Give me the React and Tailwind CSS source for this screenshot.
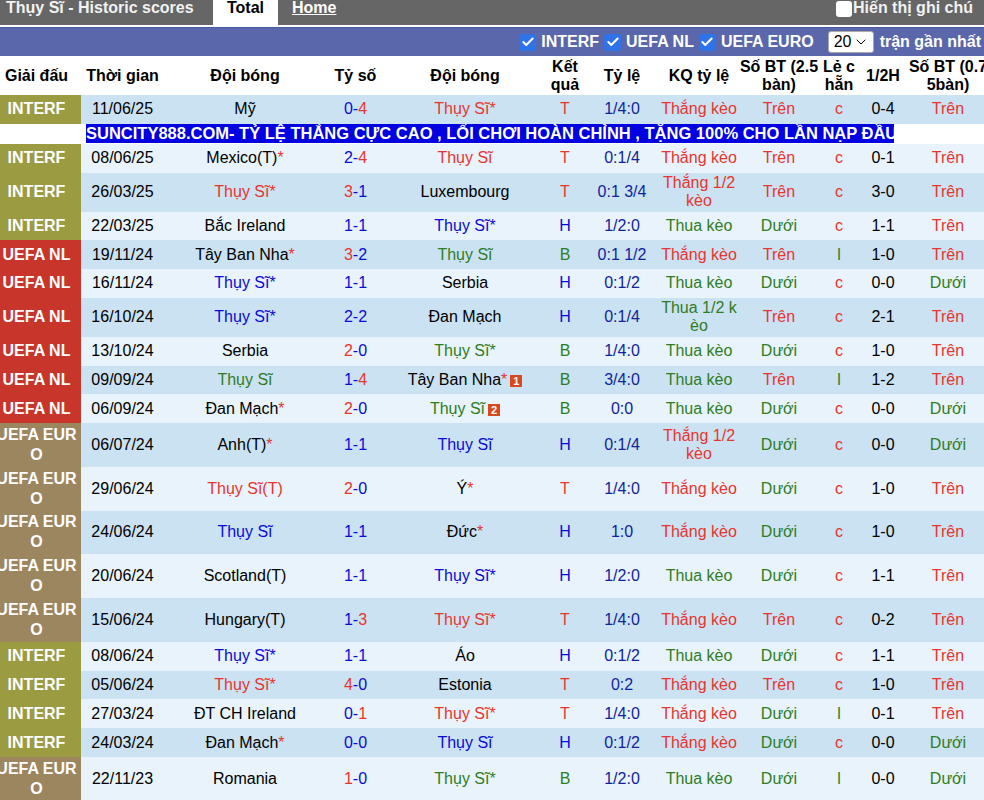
import { Check, ChevronDown } from "lucide-react";

const RED = "text-[#e8352e]";
const BLUE = "text-[#0a0ad8]";
const GREEN = "text-[#2f7d1e]";

const leagueStyles = {
  INTERF: "bg-[#9b9b42]",
  "UEFA NL": "bg-[#c8352b]",
  "UEFA EURO": "bg-[#9c8660]",
};

const rows = [
  ["INTERF", "11/06/25", "Mỹ", "0-4", "Thụy Sĩ*", "T", "1/4:0", "Thắng kèo", "Trên", "c", "0-4", "Trên", 2],
  ["AD"],
  ["INTERF", "08/06/25", "Mexico(T)*", "2-4", "Thụy Sĩ", "T", "0:1/4", "Thắng kèo", "Trên", "c", "0-1", "Trên", 2],
  ["INTERF", "26/03/25", "Thụy Sĩ*", "3-1", "Luxembourg", "T", "0:1 3/4", "Thắng 1/2 kèo", "Trên", "c", "3-0", "Trên", 1],
  ["INTERF", "22/03/25", "Bắc Ireland", "1-1", "Thụy Sĩ*", "H", "1/2:0", "Thua kèo", "Dưới", "c", "1-1", "Trên", 2],
  ["UEFA NL", "19/11/24", "Tây Ban Nha*", "3-2", "Thụy Sĩ", "B", "0:1 1/2", "Thắng kèo", "Trên", "l", "1-0", "Trên", 2],
  ["UEFA NL", "16/11/24", "Thụy Sĩ*", "1-1", "Serbia", "H", "0:1/2", "Thua kèo", "Dưới", "c", "0-0", "Dưới", 1],
  ["UEFA NL", "16/10/24", "Thụy Sĩ*", "2-2", "Đan Mạch", "H", "0:1/4", "Thua 1/2 kèo", "Trên", "c", "2-1", "Trên", 1],
  ["UEFA NL", "13/10/24", "Serbia", "2-0", "Thụy Sĩ*", "B", "1/4:0", "Thua kèo", "Dưới", "c", "1-0", "Trên", 2],
  ["UEFA NL", "09/09/24", "Thụy Sĩ", "1-4", "Tây Ban Nha*", "B", "3/4:0", "Thua kèo", "Trên", "l", "1-2", "Trên", 1, "red1"],
  ["UEFA NL", "06/09/24", "Đan Mạch*", "2-0", "Thụy Sĩ", "B", "0:0", "Thua kèo", "Dưới", "c", "0-0", "Dưới", 2, "red2"],
  ["UEFA EURO", "06/07/24", "Anh(T)*", "1-1", "Thụy Sĩ", "H", "0:1/4", "Thắng 1/2 kèo", "Dưới", "c", "0-0", "Dưới", 2],
  ["UEFA EURO", "29/06/24", "Thụy Sĩ(T)", "2-0", "Ý*", "T", "1/4:0", "Thắng kèo", "Dưới", "c", "1-0", "Trên", 1],
  ["UEFA EURO", "24/06/24", "Thụy Sĩ", "1-1", "Đức*", "H", "1:0", "Thắng kèo", "Dưới", "c", "1-0", "Trên", 1],
  ["UEFA EURO", "20/06/24", "Scotland(T)", "1-1", "Thụy Sĩ*", "H", "1/2:0", "Thua kèo", "Dưới", "c", "1-1", "Trên", 2],
  ["UEFA EURO", "15/06/24", "Hungary(T)", "1-3", "Thụy Sĩ*", "T", "1/4:0", "Thắng kèo", "Trên", "c", "0-2", "Trên", 2],
  ["INTERF", "08/06/24", "Thụy Sĩ*", "1-1", "Áo", "H", "0:1/2", "Thua kèo", "Dưới", "c", "1-1", "Trên", 1],
  ["INTERF", "05/06/24", "Thụy Sĩ*", "4-0", "Estonia", "T", "0:2", "Thắng kèo", "Trên", "c", "1-0", "Trên", 1],
  ["INTERF", "27/03/24", "ĐT CH Ireland", "0-1", "Thụy Sĩ*", "T", "1/4:0", "Thắng kèo", "Dưới", "l", "0-1", "Trên", 2],
  ["INTERF", "24/03/24", "Đan Mạch*", "0-0", "Thụy Sĩ", "H", "0:1/2", "Thắng kèo", "Dưới", "c", "0-0", "Dưới", 2],
  ["UEFA EURO", "22/11/23", "Romania", "1-0", "Thụy Sĩ*", "B", "1/2:0", "Thua kèo", "Dưới", "l", "0-0", "Dưới", 2],
];

function resultColor(result) {
  if (result === "T") return RED;
  if (result === "H") return BLUE;
  return GREEN;
}

function tone(value) {
  if (value === "Trên" || value === "c" || value.startsWith("Thắng")) return RED;
  return GREEN;
}

function Team({ name, isSwiss, result, card }) {
  const hasStar = name.endsWith("*");
  const label = hasStar ? name.slice(0, -1) : name;

  return (
    <span className={isSwiss ? resultColor(result) : "text-black"}>
      {label}
      {hasStar && <span className={isSwiss ? "" : RED}>*</span>}
      {card === "red1" && <CardBadge label="1" />}
      {card === "red2" && <CardBadge label="2" />}
    </span>
  );
}

function CardBadge({ label }) {
  return (
    <span className="ml-[3px] inline-block h-[12px] w-[12px] bg-[#d9481f] text-center align-[0px] font-['Liberation_Sans',sans-serif] text-[11px] leading-[12px] font-bold text-white">
      {label}
    </span>
  );
}

function Score({ score }) {
  const [home, away] = score.split("-");
  const homeWins = Number(home) > Number(away);
  const awayWins = Number(away) > Number(home);

  return (
    <>
      <span className={homeWins ? RED : BLUE}>{home}</span>
      <span className={BLUE}>-</span>
      <span className={awayWins ? RED : BLUE}>{away}</span>
    </>
  );
}

function Filter({ label }) {
  return (
    <label className="flex items-center gap-[5px]">
      <span className="flex h-[17px] w-[17px] items-center justify-center rounded-[3px] bg-[#2f73e8]">
        <Check size={14} strokeWidth={3.5} className="text-white" />
      </span>
      <span>{label}</span>
    </label>
  );
}

function MatchRow({ row, index }) {
  const [league, date, home, score, away, result, odds, oddsResult, overUnder, oddEven, half, overUnder2, swissSide, card] = row;
  const stripe = index % 2 === 0 ? "bg-[#cbe2f3]" : "bg-[#e8f3fb]";
  const isEuro = league === "UEFA EURO";
  const isTall = oddsResult.length > 9;

  return (
    <tr className={isEuro ? "h-[43.8px]" : isTall ? "h-[39px]" : "h-[28.75px]"}>
      <td className={`${leagueStyles[league]} p-0 text-center text-[16px] leading-[20px] font-bold break-all text-white`}>{league}</td>
      <td className={`${stripe} p-0 text-center`}>{date}</td>
      <td className={`${stripe} p-0 text-center`}>
        <Team name={home} isSwiss={swissSide === 1} result={result} />
      </td>
      <td className={`${stripe} p-0 text-center`}>
        <Score score={score} />
      </td>
      <td className={`${stripe} p-0 text-center`}>
        <Team name={away} isSwiss={swissSide === 2} result={result} card={card} />
      </td>
      <td className={`${stripe} p-0 text-center ${resultColor(result)}`}>{result}</td>
      <td className={`${stripe} p-0 text-center text-[#10239e]`}>{odds}</td>
      <td className={`${stripe} p-0 text-center break-all ${tone(oddsResult)}`}>{oddsResult}</td>
      <td className={`${stripe} p-0 text-center ${tone(overUnder)}`}>{overUnder}</td>
      <td className={`${stripe} p-0 text-center ${tone(oddEven)}`}>{oddEven}</td>
      <td className={`${stripe} p-0 text-center`}>{half}</td>
      <td className={`${stripe} p-0 text-center ${tone(overUnder2)}`}>{overUnder2}</td>
    </tr>
  );
}

export default function App() {
  let stripeIndex = -1;

  return (
    <div className="h-[800px] w-[984px] overflow-hidden bg-white font-['Liberation_Sans',Arial,sans-serif] text-[16px] leading-[18px] text-black">
      <div className="flex h-[25px] items-start justify-between overflow-hidden bg-[#666666] font-bold text-white">
        <div className="flex">
          <div className="-mt-[1px] w-[213px] pl-[6px] leading-[18px] text-[#f2f2f2]">Thụy Sĩ - Historic scores</div>
          <div className="-mt-[1px] h-[26px] w-[65px] bg-white text-center leading-[18px] text-black">Total</div>
          <a className="-mt-[1px] ml-[14px] leading-[18px] underline">Home</a>
        </div>
        <div className="-mt-[1px] flex items-center gap-[1px] pr-[11px] leading-[18px] text-[#f2f2f2]">
          <span className="mt-[1px] h-[16px] w-[16px] rounded-[3px] bg-white" />
          Hiển thị ghi chú
        </div>
      </div>

      <div className="mt-[2px] flex h-[29px] items-center justify-end gap-[5px] border-t border-[#4a5aa0] bg-[#5a67ab] pr-[3px] font-bold text-white">
        <Filter label="INTERF" />
        <Filter label="UEFA NL" />
        <Filter label="UEFA EURO" />
        <div className="mr-[1px] ml-[9px] flex h-[22px] w-[46px] items-center justify-between rounded-[3px] border border-[#aaaaaa] bg-white pr-[4px] pl-[5px] font-normal text-black">
          20
          <ChevronDown size={16} strokeWidth={1.5} />
        </div>
        <span>trận gần nhất</span>
      </div>

      <table className="-ml-[8px] w-[997px] table-fixed border-collapse">
        <colgroup>
          <col className="w-[89px]" />
          <col className="w-[83px]" />
          <col className="w-[162px]" />
          <col className="w-[59px]" />
          <col className="w-[160px]" />
          <col className="w-[40px]" />
          <col className="w-[74px]" />
          <col className="w-[80px]" />
          <col className="w-[80px]" />
          <col className="w-[40px]" />
          <col className="w-[48px]" />
          <col className="w-[82px]" />
        </colgroup>
        <thead>
          <tr className="h-[39px] font-bold">
            <th className="p-0">Giải đấu</th>
            <th className="p-0">Thời gian</th>
            <th className="p-0">Đội bóng</th>
            <th className="p-0">Tỷ số</th>
            <th className="p-0">Đội bóng</th>
            <th className="p-0">Kết quả</th>
            <th className="p-0">Tỷ lệ</th>
            <th className="p-0">KQ tỷ lệ</th>
            <th className="p-0 break-all">Số BT (2.5bàn)</th>
            <th className="p-0 break-all">Lẻ c hẵn</th>
            <th className="p-0">1/2H</th>
            <th className="p-0 break-all">Số BT (0.75bàn)</th>
          </tr>
        </thead>
        <tbody>
          {rows.map((row, i) => {
            if (row[0] === "AD") {
              return (
                <tr key={i} className="h-[20px]">
                  <td colSpan={12} className="p-0 pl-[94px]">
                    <div className="w-[808px] bg-[#0000e0] text-[16.5px] leading-[19px] font-bold whitespace-nowrap text-white">
                      SUNCITY888.COM- TỶ LỆ THẮNG CỰC CAO , LỐI CHƠI HOÀN CHỈNH , TẶNG 100% CHO LẦN NẠP ĐẦU
                    </div>
                  </td>
                </tr>
              );
            }
            stripeIndex += 1;
            return <MatchRow key={i} row={row} index={stripeIndex} />;
          })}
        </tbody>
      </table>
    </div>
  );
}
